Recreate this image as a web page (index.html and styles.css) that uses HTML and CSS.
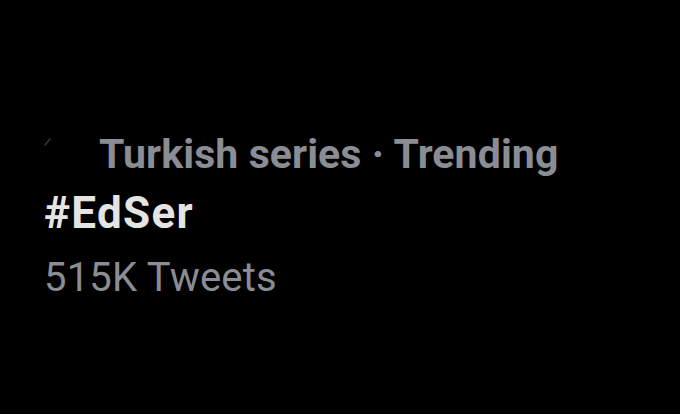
FILE: index.html
```html
<!DOCTYPE html>
<html>
<head>
<meta charset="utf-8">
<link rel="stylesheet" href="styles.css">
</head>
<body>
<div class="trend">
  <div class="context"><span class="avatar"><svg width="8" height="8" viewBox="0 0 8 8"><path d="M1 7 L6 1" stroke="#3a3a3a" stroke-width="1.4" stroke-linecap="round"/></svg></span>Turkish series · Trending</div>
  <div class="tag">#EdSer</div>
  <div class="count">515K Tweets</div>
</div>
</body>
</html>
```
FILE: styles.css
```css
html, body {
  margin: 0;
  padding: 0;
  background: #000;
  width: 680px;
  height: 414px;
  overflow: hidden;
}
.trend {
  padding: 124px 0 0 44px;
  font-family: Roboto, "Noto Sans", sans-serif;
}
.context {
  font-size: 41px;
  font-weight: 700;
  line-height: 60px;
  letter-spacing: 0.1px;
  color: #8a8d93;
  display: flex;
  align-items: center;
}
.avatar {
  width: 55px;
  height: 60px;
  display: flex;
  align-items: flex-start;
  padding-top: 14px;
  box-sizing: border-box;
}
.tag {
  font-size: 44px;
  font-weight: 700;
  line-height: 58px;
  letter-spacing: 1.3px;
  color: #e4e4e4;
}
.count {
  font-size: 40px;
  font-weight: 400;
  line-height: 64px;
  margin-top: 4px;
  letter-spacing: 0.2px;
  color: #8a8d93;
}
```
